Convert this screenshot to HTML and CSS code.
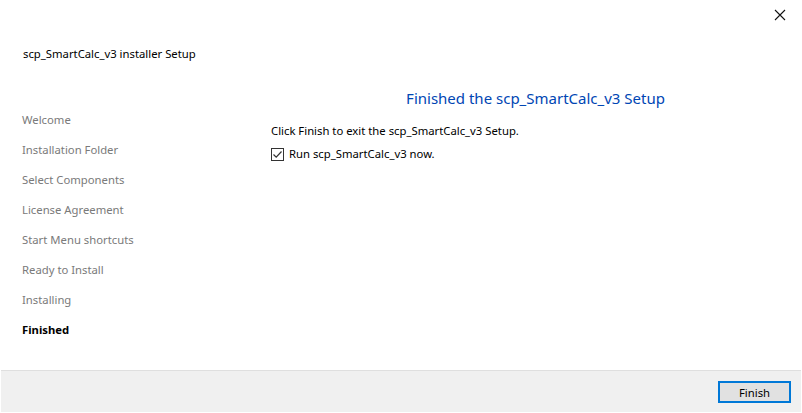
FILE: index.html
```html
<!DOCTYPE html>
<html>
<head>
<meta charset="utf-8">
<link rel="stylesheet" href="styles.css">
</head>
<body>
<div class="window">
  <div class="titlebar">
    <svg class="close" width="12" height="12" viewBox="0 0 12 12"><path d="M1 1 L11 11 M11 1 L1 11" stroke="#111" stroke-width="1.1" fill="none"/></svg>
  </div>
  <div class="header">scp_SmartCalc_v3 installer Setup</div>
  <div class="main">
    <ul class="nav">
      <li>Welcome</li>
      <li>Installation Folder</li>
      <li>Select Components</li>
      <li>License Agreement</li>
      <li>Start Menu shortcuts</li>
      <li>Ready to Install</li>
      <li>Installing</li>
      <li class="current">Finished</li>
    </ul>
    <div class="content">
      <h1 class="page-title">Finished the scp_SmartCalc_v3 Setup</h1>
      <p class="msg">Click Finish to exit the scp_SmartCalc_v3 Setup.</p>
      <label class="check">
        <span class="box"><svg width="11" height="11" viewBox="0 0 11 11"><path d="M1.5 5.5 L4.2 8.2 L9.5 2.5" stroke="#333" stroke-width="1.2" fill="none"/></svg></span>
        Run scp_SmartCalc_v3 now.
      </label>
    </div>
  </div>
  <div class="footer">
    <button class="btn">Finish</button>
  </div>
</div>
</body>
</html>
```
FILE: styles.css
```css
html, body {
  margin: 0;
  padding: 0;
  background: #fff;
}
body {
  font-family: "Noto Sans", "Open Sans", sans-serif;
  font-size: 11.3px;
  color: #000;
}
.window {
  width: 802px;
  height: 413px;
  display: flex;
  flex-direction: column;
  box-sizing: border-box;
}
.titlebar {
  height: 30px;
  display: flex;
  justify-content: flex-end;
  align-items: center;
  padding-right: 16px;
}
.close {
  display: block;
  margin-top: 0px;
}
.header {
  padding: 16px 0 0 23px;
  line-height: 16px;
  height: 16px;
}
.main {
  flex: 1;
  display: flex;
}
.nav {
  list-style: none;
  margin: 0;
  padding: 43px 0 0 22px;
  width: 228px;
}
.nav li {
  height: 30px;
  line-height: 30px;
  color: #7a7a7a;
}
.nav li.current {
  color: #000;
  font-weight: bold;
}
.content {
  flex: 1;
  padding: 26px 2px 0 21px;
  display: flex;
  flex-direction: column;
}
.page-title {
  margin: 0;
  font-size: 15px;
  font-weight: normal;
  line-height: 20px;
  color: #0046b4;
  text-align: center;
}
.msg {
  margin: 15px 0 0 0;
  line-height: 16px;
}
.check {
  margin-top: 7px;
  display: flex;
  align-items: center;
  height: 16px;
  line-height: 16px;
}
.box {
  width: 11px;
  height: 11px;
  border: 1px solid #333;
  margin-right: 5px;
  display: flex;
  align-items: center;
  justify-content: center;
}
.box svg { display: block; }
.footer {
  height: 41px;
  margin: 0 1px 1px 1px;
  background: #f0f0f0;
  border-top: 1px solid #dfdfdf;
  display: flex;
  justify-content: flex-end;
  align-items: center;
  padding-right: 10px;
}
.btn {
  width: 73px;
  height: 22px;
  margin-top: 1px;
  border: 2px solid #0078d7;
  background: #e1e1e1;
  font-family: inherit;
  font-size: 11.3px;
  color: #000;
  padding: 0;
}
```
